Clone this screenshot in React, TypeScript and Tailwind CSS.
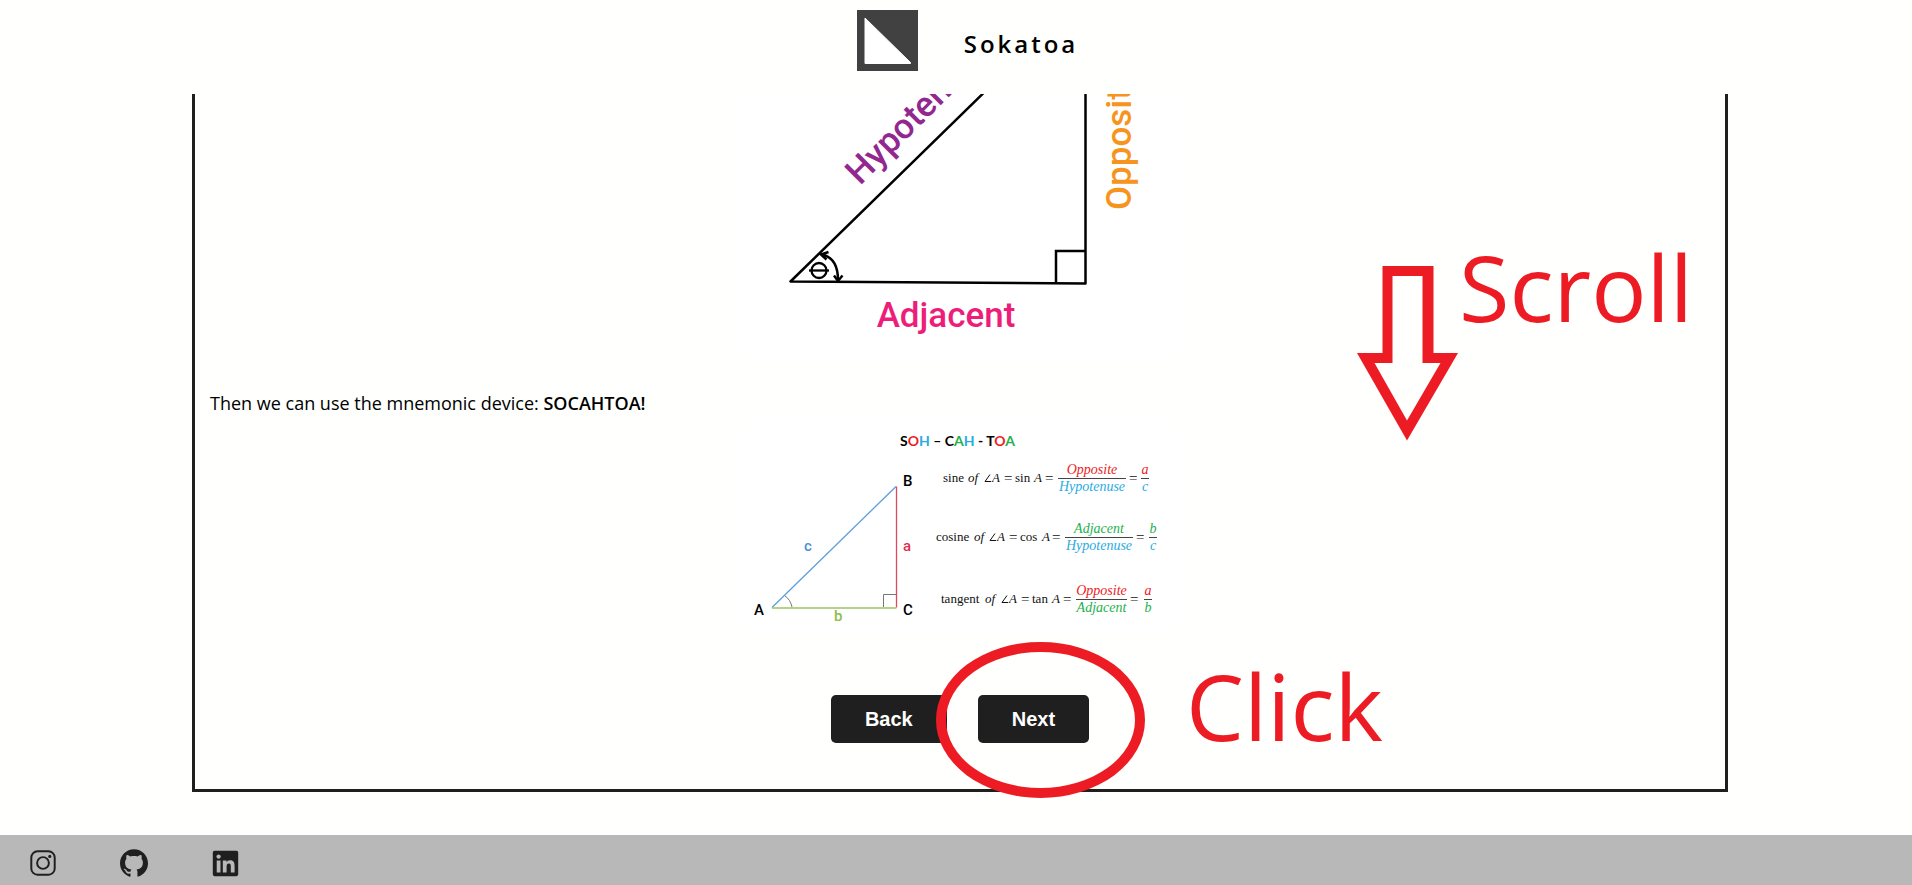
import React from 'react';
import { FaLinkedin } from 'react-icons/fa';
import { SiGithub } from 'react-icons/si';

const RED = '#ed1c24';
const BLUE = '#29abe2';
const GREEN = '#22b14c';

function LogoMark() {
  return (
    <svg className="size-[61px]" viewBox="0 0 61 61" aria-hidden="true">
      <rect width="61" height="61" fill="#414141" />
      <path d="M8 8L53.500 52.500V53.500H8Z" fill="#fff" stroke="#fff" strokeWidth="1" strokeLinejoin="round" />
    </svg>
  );
}

function SidesDiagram() {
  return (
    <svg
      className="mx-auto block h-[266px] w-[440px] bg-white font-[Roboto,sans-serif] font-medium"
      viewBox="740 94 440 266"
      role="img"
      aria-label="Right triangle with its sides named"
    >
      <g fill="none" stroke="#000" strokeWidth="2.5">
        <path d="M1003 74L790.500 281.500L1085.500 283.500V74" strokeLinejoin="round" />
        <path d="M1056 283V251H1085" />
        <circle cx="819" cy="270.500" r="7.500" strokeWidth="2.300" />
        <path d="M809 270.500H829" strokeWidth="2.300" />
        <path d="M822 254.500C833 257 838 265 838 280" />
        <path d="M828.500 252L821 254.500L826.500 259.500M834 275.500L838 281L842.500 275.500" />
      </g>
      <g fontSize="35">
        <text transform="translate(860 186) rotate(-45)" fill="#92278f">Hypotenuse</text>
        <text transform="translate(1131 210) rotate(-90)" fill="#f7941d">Opposite</text>
        <text x="946" y="327" textAnchor="middle" fill="#ed1e79">Adjacent</text>
      </g>
    </svg>
  );
}

type RatioProps = {
  x: number[];
  y: number;
  name: string;
  short: string;
  top: string;
  topColor: string;
  bottom: string;
  bottomColor: string;
  bar: [number, number];
  a: string;
  b: string;
  end: number;
};

function Ratio({ x, y, name, short, top, topColor, bottom, bottomColor, bar, a, b, end }: RatioProps) {
  const mid = (bar[0] + bar[1]) / 2;
  return (
    <g fontSize="13" fill="#111" strokeWidth="0.200" stroke="none">
      <text x={x[0]} y={y}>{name}</text>
      <text x={x[1]} y={y} fontStyle="italic">of</text>
      <path d={`M${x[2] + 6} ${y - 7.5}L${x[2] + 1} ${y - 0.5}H${x[2] + 7}`} fill="none" stroke="#111" strokeWidth="1" />
      <text x={x[2] + 8} y={y} fontStyle="italic">A</text>
      <text x={x[4]} y={y}>{short}</text>
      <text x={x[5]} y={y} fontStyle="italic">A</text>
      <g fontSize="15">
        <text x={x[3]} y={y + 1}>=</text>
        <text x={x[6]} y={y + 1}>=</text>
        <text x={bar[1] + 3} y={y + 1}>=</text>
      </g>
      <g fontSize="14" fontStyle="italic" textAnchor="middle">
        <text x={mid} y={y - 8} fill={topColor}>{top}</text>
        <text x={mid} y={y + 9} fill={bottomColor}>{bottom}</text>
        <text x={end} y={y - 8} fill={topColor}>{a}</text>
        <text x={end} y={y + 9} fill={bottomColor}>{b}</text>
      </g>
      <path d={`M${bar[0]} ${y - 3.5}H${bar[1]}M${end - 4} ${y - 3.5}H${end + 4}`} stroke="#444" strokeWidth="1" />
    </g>
  );
}

function RatiosDiagram() {
  return (
    <svg
      className="mx-auto block h-[210px] w-[440px] bg-white"
      viewBox="740 420 440 210"
      role="img"
      aria-label="Sine, cosine and tangent of angle A"
    >
      <text className="font-[Lato,sans-serif] font-bold" x="957.500" y="446" fontSize="14" textAnchor="middle">
        S<tspan fill={RED}>O</tspan><tspan fill={BLUE}>H</tspan> – C<tspan fill={GREEN}>A</tspan>
        <tspan fill={BLUE}>H</tspan> - T<tspan fill={RED}>O</tspan><tspan fill={GREEN}>A</tspan>
      </text>
      <g fill="none">
        <path d="M784.500 595.500A18 18 0 0 1 792 607M883.500 607V594.500H896" stroke="#777" />
        <path d="M772 607.500L896 486.500" stroke="#5b9fdc" strokeWidth="1.300" />
        <path d="M896.500 486.500V607.500" stroke="#e0485c" strokeWidth="1.300" />
        <path d="M772 608H896.500" stroke="#9bc45c" strokeWidth="1.500" />
      </g>
      <g className="font-[Roboto,sans-serif] font-medium" fontSize="15">
        <text x="903" y="486">B</text>
        <text x="754" y="615">A</text>
        <text x="903" y="615">C</text>
        <text x="804" y="551" fill="#4a90d9">c</text>
        <text x="903" y="551" fill="#e0304e">a</text>
        <text x="834" y="621" fill="#8fbc4a">b</text>
      </g>
      <g className="font-['Liberation_Serif',serif]">
        <Ratio x={[943, 968, 984, 1004, 1015, 1034, 1045]} y={482} name="sine" short="sin" top="Opposite" topColor={RED} bottom="Hypotenuse" bottomColor={BLUE} bar={[1058, 1126]} a="a" b="c" end={1145} />
        <Ratio x={[936, 974, 989, 1009, 1020, 1042, 1052]} y={541} name="cosine" short="cos" top="Adjacent" topColor={GREEN} bottom="Hypotenuse" bottomColor={BLUE} bar={[1065, 1133]} a="b" b="c" end={1153} />
        <Ratio x={[941, 985, 1001, 1021, 1032, 1052, 1063]} y={603} name="tangent" short="tan" top="Opposite" topColor={RED} bottom="Adjacent" bottomColor={GREEN} bar={[1076, 1127]} a="a" b="b" end={1148} />
      </g>
    </svg>
  );
}

function InstagramIcon() {
  return (
    <svg className="size-[30px]" viewBox="0 0 50 50" fill="none" stroke="#1f1f1f" strokeWidth="3.300" aria-hidden="true">
      <rect x="5.500" y="5.500" width="39" height="39" rx="10.500" />
      <circle cx="25" cy="25" r="9.800" />
      <circle cx="36.300" cy="14" r="2.600" fill="#1f1f1f" stroke="none" />
    </svg>
  );
}

const buttonClass =
  "h-12 rounded-[5px] bg-[#1f1f1f] px-[34px] font-['Liberation_Sans',sans-serif] text-xl font-bold text-white";

export default function App() {
  return (
    <div className="flex min-h-screen flex-col bg-[#fffffd] font-['Open_Sans',sans-serif] text-black">
      <header className="flex h-[94px] items-start justify-center gap-[46px] pt-[10px] pl-[23px]">
        <LogoMark />
        <h1 className="pt-[18px] text-2xl font-semibold tracking-[3px]">Sokatoa</h1>
      </header>

      <main className="relative mr-[184px] ml-[192px] border-x-[3px] border-b-[3px] border-[#1f1f1f] pb-[46px]">
        <SidesDiagram />
        <p className="px-[15px] pt-[30px] pb-[3px] text-lg leading-[27px]">
          Then we can use the mnemonic device: <strong className="font-semibold">SOCAHTOA!</strong>
        </p>
        <RatiosDiagram />
        <div className="flex justify-center gap-[31px] pt-[65px]">
          <button type="button" className={buttonClass}>Back</button>
          <button type="button" className={buttonClass}>Next</button>
        </div>

        <div className="pointer-events-none absolute top-[548px] left-1/2 ml-[-24px] h-[156px] w-[209px] rounded-[50%] border-[10px] border-[#ed1c24]" />
        <span className="pointer-events-none absolute top-[548px] left-1/2 ml-[226px] font-['Open_Sans',sans-serif] text-[92px] leading-[128px] text-[#ed1c24]">
          Click
        </span>
        <svg className="pointer-events-none absolute top-[172px] right-[267px] h-[175px] w-[101px]" viewBox="1356.500 266 101 175" aria-hidden="true">
          <path
            fill="#ed1c24"
            fillRule="evenodd"
            d="M1382 266H1433V353H1457.500L1406.500 440.500L1356.500 353H1382ZM1392 276V363H1374L1406.500 420.500L1440 363H1422V276Z"
          />
        </svg>
        <span className="pointer-events-none absolute top-[129px] right-[32px] font-['Open_Sans',sans-serif] text-[92px] leading-[128px] text-[#ed1c24]">
          Scroll
        </span>
      </main>

      <footer className="mt-[43px] flex h-[50px] items-center gap-[61px] bg-[#b8b8b8] pt-[6px] pl-[28px] text-[#1f1f1f]">
        <a href="#instagram" aria-label="Instagram"><InstagramIcon /></a>
        <a href="#github" aria-label="GitHub" className="flex size-[30px] items-center justify-center"><SiGithub size={28} /></a>
        <a href="#linkedin" aria-label="LinkedIn" className="flex size-[30px] items-center justify-center"><FaLinkedin size={29} /></a>
      </footer>
    </div>
  );
}
